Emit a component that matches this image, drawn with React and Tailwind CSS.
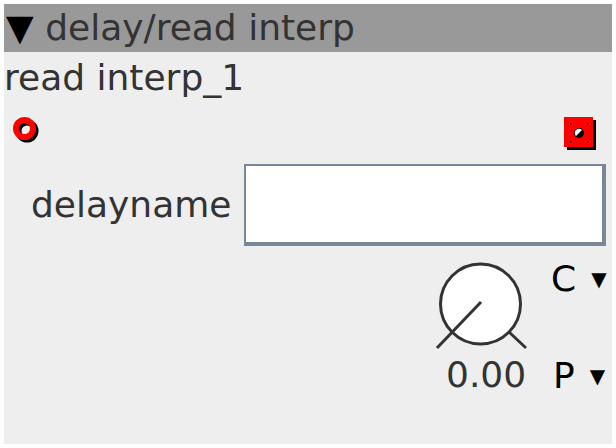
import React from 'react';

const Inlet = () => (
  <svg width="28" height="28" viewBox="0 0 28 28">
    <circle cx="14" cy="14" r="8.5" fill="none" stroke="#000" strokeWidth="6" />
    <circle cx="11.5" cy="11.5" r="8.5" fill="none" stroke="#ff0000" strokeWidth="6" />
  </svg>
);

const Outlet = () => (
  <svg width="33" height="34" viewBox="0 0 33 34">
    <rect x="3" y="3" width="29" height="30" fill="#000" />
    <rect x="0" y="0" width="29" height="30" fill="#ff0000" />
    <circle cx="15" cy="16" r="5" fill="#000" />
    <path d="M12 19 A4 4 0 0 1 18 13 Z" fill="#fff" />
    <rect x="6" y="6" width="1.5" height="1.5" fill="#000" />
    <rect x="23" y="6" width="1.5" height="1.5" fill="#000" />
    <rect x="6" y="24" width="1.5" height="1.5" fill="#000" />
    <rect x="23" y="24" width="1.5" height="1.5" fill="#000" />
  </svg>
);

const Knob = () => (
  <svg width="94" height="90" viewBox="0 0 94 90">
    <circle cx="46.5" cy="43" r="40" fill="#fff" stroke="#333" strokeWidth="3" />
    <line x1="47" y1="41" x2="3" y2="87" stroke="#333" strokeWidth="3" />
    <line x1="75" y1="71" x2="92" y2="87" stroke="#333" strokeWidth="3" />
  </svg>
);

export default function App() {
  return (
    <div className="w-[616px] h-[448px] bg-white p-1" style={{ fontFamily: '"DejaVu Sans", sans-serif' }}>
      <div className="w-[608px] h-[440px] bg-[#eeeeee] flex flex-col text-[#333333] text-[36px] leading-none">
        {/* Header */}
        <div className="h-12 shrink-0 bg-[#999999] flex items-center pl-[2px]">
          <span className="text-black">▼</span>
          <span>&nbsp;delay/read interp</span>
        </div>
        <div className="h-[52px] shrink-0 flex items-center">read interp_1</div>
        {/* Inlets/outlets */}
        <div className="h-[60px] shrink-0 flex items-start justify-between pl-[9px] pr-[15px] pt-[13px]">
          <Inlet />
          <Outlet />
        </div>
        {/* delayname row */}
        <div className="h-[82px] shrink-0 flex items-center">
          <span className="pl-[27px] w-[240px]">delayname</span>
          <div className="w-[362px] h-[82px] bg-white border-t-2 border-l-2 border-b-4 border-r-4 border-[#778899]" />
        </div>
        {/* Knob */}
        <div className="flex pl-[430px] pt-[15px]">
          <div className="flex flex-col w-[94px]">
            <Knob />
            <span className="mt-[6px] pl-[12px]">0.00</span>
          </div>
          <div className="flex flex-col ml-[23px] text-black gap-[61px]">
            <div className="flex items-center"><span>C</span><span className="text-[20px] ml-[15px]">▼</span></div>
            <div className="flex items-center pl-[2px]"><span>P</span><span className="text-[20px] ml-[15px]">▼</span></div>
          </div>
        </div>
      </div>
    </div>
  );
}
